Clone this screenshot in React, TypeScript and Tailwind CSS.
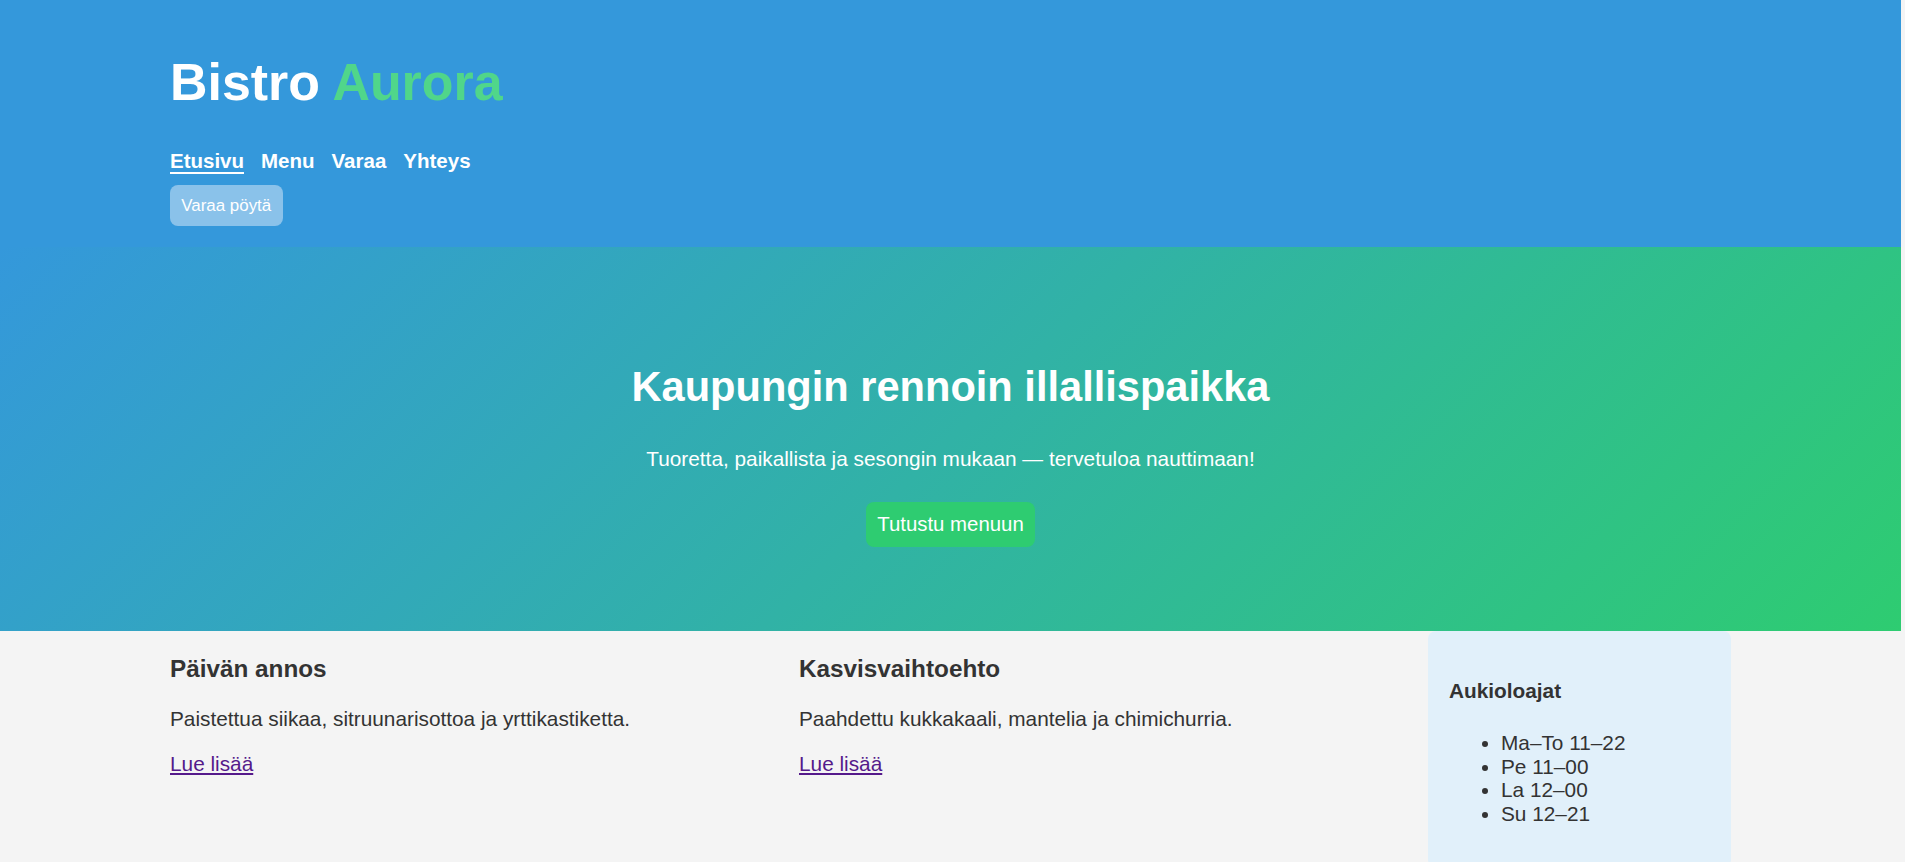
import React from "react";

export default function App() {
  return (
    <div className="min-h-screen bg-[#f4f4f4] pr-[4px] font-['Liberation_Sans',Arial,sans-serif] text-[20.8px] text-[#333333]">
      <header className="bg-[#3498db] px-[170px] pt-[52px] pb-[21px]">
        <h1 className="text-[51.9px] font-bold leading-[60px] text-white">
          Bistro <span className="text-[#50d68a]">Aurora</span>
        </h1>
        <nav className="mt-[37px] flex items-start gap-[17px] text-[20.5px] font-bold leading-[23px] text-white">
          <a href="#" className="border-b-2 border-white">Etusivu</a>
          <a href="#">Menu</a>
          <a href="#">Varaa</a>
          <a href="#">Yhteys</a>
        </nav>
        <button className="mt-[10.5px] flex h-[41.5px] w-[112.5px] items-center justify-center rounded-[8px] bg-[#8ac2ea] text-[16.9px] text-white">
          Varaa pöytä
        </button>
      </header>

      <section className="flex flex-col items-center bg-[linear-gradient(135deg,#3498db,#2ecc71)] pt-[116px] pb-[84px] text-center text-white">
        <h2 className="text-[41.6px] font-bold leading-[47.8px]">Kaupungin rennoin illallispaikka</h2>
        <p className="mt-[36.5px] text-[20.8px] leading-[23.9px]">
          Tuoretta, paikallista ja sesongin mukaan — tervetuloa nauttimaan!
        </p>
        <button className="mt-[31px] flex h-[44.4px] items-center rounded-[8px] bg-[#2ecc71] px-[11.7px] text-[20.4px] text-white">
          Tutustu menuun
        </button>
      </section>

      <main className="grid grid-cols-[1fr_1fr_303px] gap-x-[24px] px-[170px] leading-[23.9px]">
        <article>
          <h3 className="mt-[24.3px] text-[24.3px] font-bold leading-[27.9px]">Päivän annos</h3>
          <p className="mt-[24.3px]">Paistettua siikaa, sitruunarisottoa ja yrttikastiketta.</p>
          <p className="mt-[20.8px]">
            <a href="#" className="text-[#551a8b] underline">Lue lisää</a>
          </p>
        </article>
        <article>
          <h3 className="mt-[24.3px] text-[24.3px] font-bold leading-[27.9px]">Kasvisvaihtoehto</h3>
          <p className="mt-[24.3px]">Paahdettu kukkakaali, mantelia ja chimichurria.</p>
          <p className="mt-[20.8px]">
            <a href="#" className="text-[#551a8b] underline">Lue lisää</a>
          </p>
        </article>
        <aside className="rounded-[8px] bg-[#e1f0fa] px-[21px] pt-[20.8px] pb-[20.8px]">
          <h4 className="mt-[27.7px] text-[20.8px] font-bold leading-[23.9px]">Aukioloajat</h4>
          <ul className="mt-[27.7px] mb-[20.8px] list-disc pl-[52px]">
            <li>Ma–To 11–22</li>
            <li>Pe 11–00</li>
            <li>La 12–00</li>
            <li>Su 12–21</li>
          </ul>
        </aside>
      </main>
    </div>
  );
}
